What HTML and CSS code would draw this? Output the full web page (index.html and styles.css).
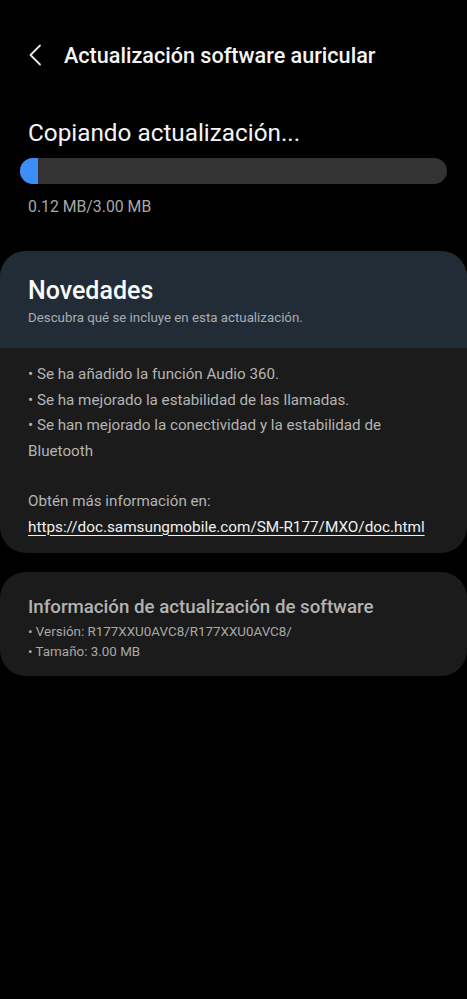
FILE: index.html
```html
<!DOCTYPE html>
<html lang="es">
<head>
<meta charset="utf-8">
<link rel="stylesheet" href="styles.css">
</head>
<body>
<div class="screen">
  <header class="appbar">
    <svg class="back" width="14" height="22" viewBox="0 0 14 22"><path d="M12 1.5 L2.5 11 L12 20.5" fill="none" stroke="#e8e8e8" stroke-width="1.8" stroke-linecap="round" stroke-linejoin="round"/></svg>
    <h1 class="title">Actualización software auricular</h1>
  </header>

  <section class="progress-section">
    <h2 class="status">Copiando actualización...</h2>
    <div class="bar"><div class="fill" style="width:18px"></div></div>
    <p class="size">0.12 MB/3.00 MB</p>
  </section>

  <section class="card news">
    <div class="news-head">
      <h2 class="news-title">Novedades</h2>
      <p class="news-sub">Descubra qué se incluye en esta actualización.</p>
    </div>
    <div class="news-body">
      <p class="line">• Se ha añadido la función Audio 360.</p>
      <p class="line">• Se ha mejorado la estabilidad de las llamadas.</p>
      <p class="line">• Se han mejorado la conectividad y la estabilidad de Bluetooth</p>
      <p class="line gap">Obtén más información en:</p>
      <p class="line"><a class="link" href="#">https://doc.samsungmobile.com/SM-R177/MXO/doc.html</a></p>
    </div>
  </section>

  <section class="card info">
    <h2 class="info-title">Información de actualización de software</h2>
    <p class="info-line">• Versión: R177XXU0AVC8/R177XXU0AVC8/</p>
    <p class="info-line">• Tamaño: 3.00 MB</p>
  </section>
</div>
</body>
</html>
```

FILE: styles.css
```css
html, body {
  margin: 0;
  padding: 0;
  background: #000;
}
body {
  font-family: Roboto, "Noto Sans", sans-serif;
  color: #fafafa;
}
.screen {
  width: 467px;
  height: 999px;
  background: #000;
  overflow: hidden;
}
h1, h2, p { margin: 0; font-weight: normal; }

.appbar {
  display: flex;
  align-items: center;
  height: 40px;
  margin-top: 35px;
  padding-left: 28px;
}
.back { flex: none; }
.title {
  margin-left: 22px;
  font-size: 21.6px;
  font-weight: 500;
  color: #f5f5f5;
}

.progress-section {
  padding: 43px 20px 0 20px;
}
.status {
  padding-left: 8px;
  font-size: 24.3px;
  color: #f5f5f5;
  line-height: 30px;
}
.bar {
  margin-top: 10px;
  height: 26px;
  border-radius: 13px;
  background: #333333;
  overflow: hidden;
  display: flex;
}
.fill {
  background: #3d8ef8;
  height: 100%;
}
.size {
  margin-top: 13px;
  padding-left: 8px;
  font-size: 15.8px;
  color: #a8a8a8;
  line-height: 20px;
}

.card {
  border-radius: 26px;
  overflow: hidden;
  background: #1b1b1b;
}
.news { margin-top: 34px; }
.news-head {
  background: #222c37;
  padding: 25px 28px 21px;
  height: 97px;
  box-sizing: border-box;
}
.news-title {
  font-size: 25px;
  font-weight: 500;
  color: #fafafa;
  line-height: 30px;
}
.news-sub {
  margin-top: 3px;
  font-size: 13.3px;
  color: #a9adb2;
  line-height: 17px;
}
.news-body {
  padding: 14px 40px 13px 28px;
}
.line {
  font-size: 15.2px;
  line-height: 25.7px;
  color: #b4b4b4;
}
.line.gap { margin-top: 24px; }
.link {
  font-size: 15.3px;
  color: #f0f0f0;
  text-decoration: underline;
  text-underline-offset: 3px;
}

.info {
  margin-top: 19px;
  padding: 24px 28px 19px;
  height: 104px;
  box-sizing: border-box;
}
.info-title {
  font-size: 18.7px;
  font-weight: 500;
  color: #b3b3b3;
  line-height: 22px;
}
.info-line {
  font-size: 13.4px;
  color: #a8a8a8;
  line-height: 19.5px;
}
.info-title + .info-line { margin-top: 4px; }
```
